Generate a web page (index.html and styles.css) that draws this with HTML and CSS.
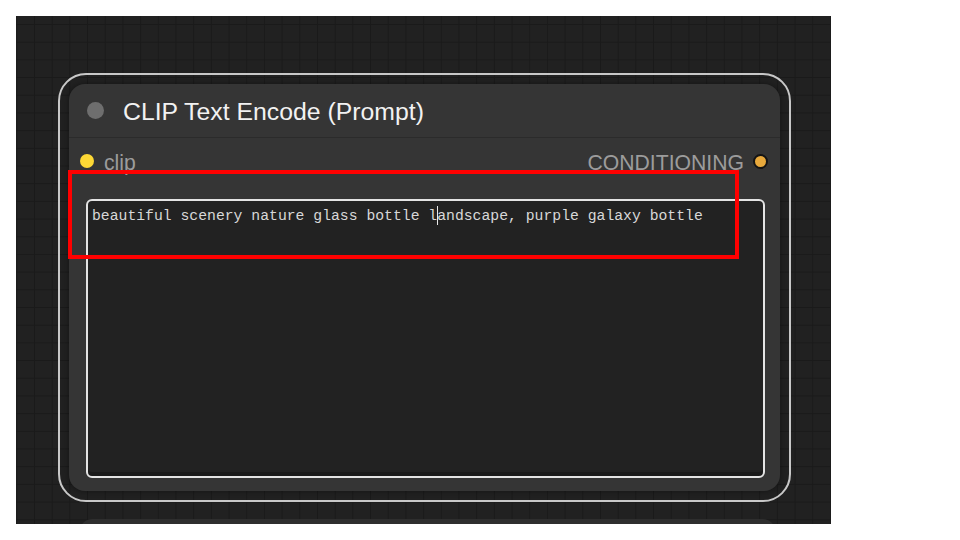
FILE: index.html
```html
<!DOCTYPE html>
<html>
<head>
<meta charset="utf-8">
<link rel="stylesheet" href="styles.css">
</head>
<body>
<div class="canvas">
  <div class="node-outline">
    <div class="node">
      <div class="node-title">
        <span class="title-dot"></span>
        <span class="title-text">CLIP Text Encode (Prompt)</span>
      </div>
      <div class="slots">
        <div class="slot slot-in"><span class="dot dot-clip"></span><span>clip</span></div>
        <div class="slot slot-out"><span>CONDITIONING</span><span class="dot dot-cond"></span></div>
      </div>
      <div class="prompt">beautiful scenery nature glass bottle l<span class="caret"></span>andscape, purple galaxy bottle</div>
    </div>
  </div>
  <div class="next-node"></div>
  <div class="highlight"></div>
</div>
</body>
</html>
```
FILE: styles.css
```css
html, body {
  margin: 0;
  padding: 0;
  background: #ffffff;
}
body {
  padding: 16px 0 0 16px;
  width: 960px;
  height: 540px;
  box-sizing: border-box;
  font-family: "Liberation Sans", Arial, sans-serif;
}
.canvas {
  position: relative;
  width: 815px;
  height: 508px;
  overflow: hidden;
  background-color: #212121;
  background-image:
    linear-gradient(to right, #1a1a1a 0, #1a1a1a 1px, transparent 1px),
    linear-gradient(to bottom, #1a1a1a 0, #1a1a1a 1px, transparent 1px);
  background-size: 17.7px 17.7px;
  background-position: 0.3px 8px;
  padding: 57px 0 0 42px;
  box-sizing: border-box;
}
.node-outline {
  width: 733px;
  height: 429px;
  box-sizing: border-box;
  border: 2px solid #c8c8c8;
  border-radius: 28px;
  padding: 9px;
}
.node {
  width: 711px;
  height: 407px;
  background: #353535;
  border-radius: 16px;
  display: flex;
  flex-direction: column;
  box-shadow: 0 0 6px rgba(0,0,0,0.4);
}
.node-title {
  height: 54px;
  box-sizing: border-box;
  border-bottom: 1px solid #2b2b2b;
  display: flex;
  align-items: center;
  padding-left: 18px;
  gap: 19px;
}
.title-dot {
  width: 17px;
  height: 17px;
  border-radius: 50%;
  background: #6e6e6e;
}
.title-text {
  color: #f2f2f2;
  font-size: 24.8px;
  margin-top: 2px;
}
.slots {
  height: 46px;
  display: flex;
  justify-content: space-between;
  align-items: center;
  padding: 0 12px 0 11px;
}
.slot {
  display: flex;
  align-items: center;
  color: #9c9c9c;
  font-size: 21.2px;
}
.slot-in {
  gap: 10px;
}
.slot-out {
  gap: 9px;
}
.slot span:not(.dot) {
  margin-top: 3px;
}
.dot {
  border-radius: 50%;
  box-sizing: border-box;
}
.dot-clip {
  width: 14px;
  height: 14px;
  background: #fdd835;
}
.dot-cond {
  width: 15px;
  height: 15px;
  background: #e8a93c;
  border: 2px solid #141414;
}
.prompt {
  margin: 15px 15px 0 17px;
  height: 279px;
  box-sizing: border-box;
  border: 2px solid #e4e4e4;
  border-radius: 6px;
  background: #222222;
  box-shadow: inset 0 -4px 0 #1a1a1a;
  padding: 5px 4px;
  font-family: "Liberation Mono", "DejaVu Sans Mono", monospace;
  font-size: 14.75px;
  line-height: 18px;
  color: #d8d8d8;
  white-space: pre;
}
.caret {
  display: inline-block;
  width: 1px;
  height: 19px;
  background: #e8e8e8;
  vertical-align: -5px;
  margin-right: -1px;
}
.next-node {
  position: absolute;
  left: 64px;
  top: 503px;
  width: 695px;
  height: 30px;
  background: #2e2e2e;
  border-radius: 12px;
}
.highlight {
  position: absolute;
  left: 52px;
  top: 154px;
  width: 671px;
  height: 89px;
  border: 4px solid #ff0000;
  box-sizing: border-box;
}
```
